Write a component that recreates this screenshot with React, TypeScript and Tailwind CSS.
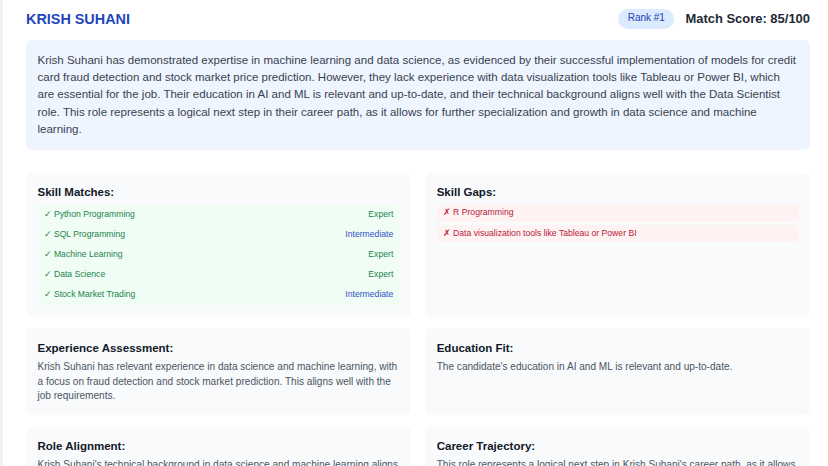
import type { ReactNode } from "react";

type Skill = { name: string; level: "Expert" | "Intermediate" };

const matches: Skill[] = [
  { name: "Python Programming", level: "Expert" },
  { name: "SQL Programming", level: "Intermediate" },
  { name: "Machine Learning", level: "Expert" },
  { name: "Data Science", level: "Expert" },
  { name: "Stock Market Trading", level: "Intermediate" },
];

const gaps = ["R Programming", "Data visualization tools like Tableau or Power BI"];

function Card({ title, children }: { title: string; children: ReactNode }) {
  return (
    <div className="rounded-[6px] bg-[#f9fafb] p-[11.5px]">
      <h3 className="mb-[3px] text-[11.5px] font-bold leading-[17.3px] text-[#111827]">{title}</h3>
      {children}
    </div>
  );
}

function Para({ children }: { children: ReactNode }) {
  return <p className="text-[10.08px] leading-[14.4px] text-[#4b5563]">{children}</p>;
}

export default function App() {
  return (
    <div
      className="min-h-[466px] overflow-hidden border-l-[3px] border-[#f0f1f3] bg-white"
      style={{ fontFamily: '"Liberation Sans", Arial, sans-serif' }}
    >
      <div className="ml-[23px] w-[784px] pt-[8.6px]">
        <header className="mb-[11.5px] flex h-[20.2px] items-center justify-between">
          <h1 className="text-[14.4px] font-bold leading-[20px] text-[#1e46bd]">KRISH SUHANI</h1>
          <div className="flex items-center gap-[11px]">
            <span className="rounded-full bg-[#dbeafe] px-[9.5px] py-[2.9px] text-[10px] leading-[14.4px] text-[#1e40af]">
              Rank #1
            </span>
            <span className="text-[12.96px] font-bold leading-[18px] text-[#1f2937]">Match Score: 85/100</span>
          </div>
        </header>

        <div className="mb-[23px] rounded-[6px] bg-[#eff5fe] p-[11.5px]">
          <p className="text-[11.52px] leading-[17.3px] text-[#374151]">
            Krish Suhani has demonstrated expertise in machine learning and data science, as evidenced by their
            successful implementation of models for credit card fraud detection and stock market price prediction.
            However, they lack experience with data visualization tools like Tableau or Power BI, which are essential
            for the job. Their education in AI and ML is relevant and up-to-date, and their technical background aligns
            well with the Data Scientist role. This role represents a logical next step in their career path, as it
            allows for further specialization and growth in data science and machine learning.
          </p>
        </div>

        <div className="grid grid-cols-2 gap-x-[14.4px] gap-y-[11.8px]">
          <div className="rounded-[6px] bg-[#f9fafb] p-[11.5px]">
            <h3 className="mb-[3px] text-[11.5px] font-bold leading-[17.3px] text-[#111827]">Skill Matches:</h3>
            <ul className="flex flex-col">
              {matches.map((s) => (
                <li
                  key={s.name}
                  className="flex items-center justify-between bg-[#f0fdf4] px-[6px] py-[4.3px] text-[8.64px] leading-[11.5px]"
                >
                  <span className="text-[#23834d]">✓ {s.name}</span>
                  <span className={s.level === "Expert" ? "text-[#23834d]" : "text-[#2f52c6]"}>{s.level}</span>
                </li>
              ))}
            </ul>
          </div>

          <div className="rounded-[6px] bg-[#f9fafb] p-[11.5px]">
            <h3 className="mb-[3px] text-[11.5px] font-bold leading-[17.3px] text-[#111827]">Skill Gaps:</h3>
            <ul className="flex flex-col gap-[2.9px]">
              {gaps.map((g) => (
                <li
                  key={g}
                  className="rounded-[3px] bg-[#fef2f2] px-[6px] py-[2.9px] text-[8.64px] leading-[11.5px] text-[#b4233c]"
                >
                  ✗ {g}
                </li>
              ))}
            </ul>
          </div>

          <Card title="Experience Assessment:">
            <Para>
              Krish Suhani has relevant experience in data science and machine learning, with a focus on fraud
              detection and stock market prediction. This aligns well with the job requirements.
            </Para>
          </Card>

          <Card title="Education Fit:">
            <Para>The candidate's education in AI and ML is relevant and up-to-date.</Para>
          </Card>

          <Card title="Role Alignment:">
            <Para>
              Krish Suhani's technical background in data science and machine learning aligns well with the Data
              Scientist role and its core responsibilities.
            </Para>
          </Card>

          <Card title="Career Trajectory:">
            <Para>
              This role represents a logical next step in Krish Suhani's career path, as it allows for further
              specialization and growth in data science and machine learning.
            </Para>
          </Card>
        </div>
      </div>
    </div>
  );
}
